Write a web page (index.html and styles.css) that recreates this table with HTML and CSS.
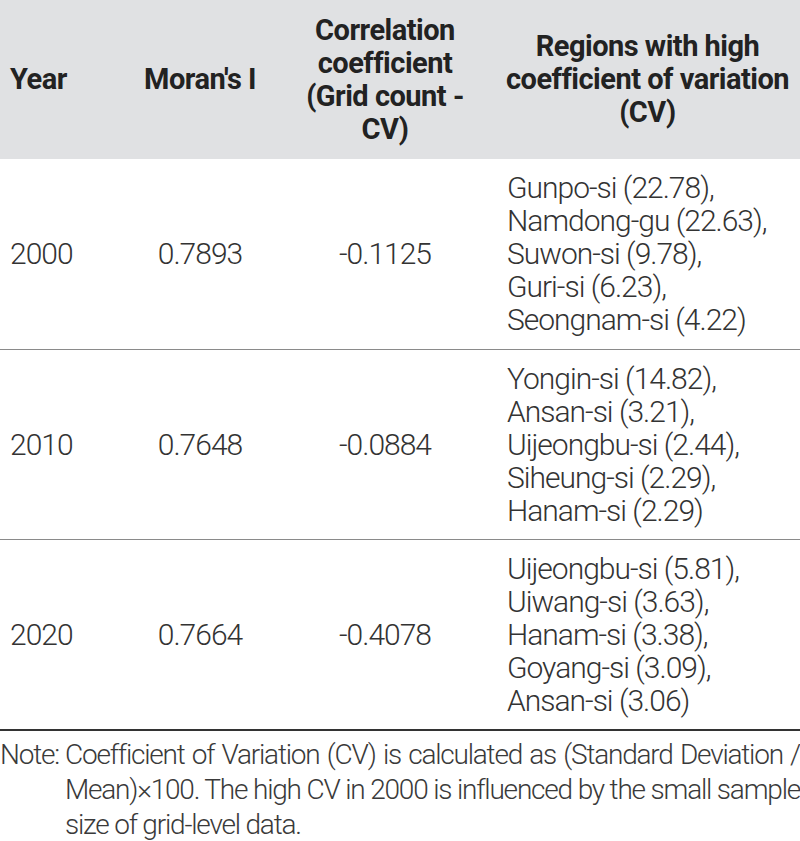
FILE: index.html
```html
<!DOCTYPE html>
<html lang="en">
<head>
<meta charset="utf-8">
<title>Table</title>
<link rel="stylesheet" href="styles.css">
</head>
<body>
<table class="data">
  <colgroup>
    <col class="c-year">
    <col class="c-moran">
    <col class="c-corr">
    <col class="c-reg">
  </colgroup>
  <thead>
    <tr>
      <th class="left">Year</th>
      <th>Moran's I</th>
      <th class="narrow">Correlation coefficient (Grid count - CV)</th>
      <th>Regions with high coefficient of variation (CV)</th>
    </tr>
  </thead>
  <tbody>
    <tr>
      <td class="left">2000</td>
      <td>0.7893</td>
      <td>-0.1125</td>
      <td class="regions">Gunpo-si (22.78),<br>Namdong-gu (22.63),<br>Suwon-si (9.78),<br>Guri-si (6.23),<br>Seongnam-si (4.22)</td>
    </tr>
    <tr>
      <td class="left">2010</td>
      <td>0.7648</td>
      <td>-0.0884</td>
      <td class="regions">Yongin-si (14.82),<br>Ansan-si (3.21),<br>Uijeongbu-si (2.44),<br>Siheung-si (2.29),<br>Hanam-si (2.29)</td>
    </tr>
    <tr>
      <td class="left">2020</td>
      <td>0.7664</td>
      <td>-0.4078</td>
      <td class="regions">Uijeongbu-si (5.81),<br>Uiwang-si (3.63),<br>Hanam-si (3.38),<br>Goyang-si (3.09),<br>Ansan-si (3.06)</td>
    </tr>
  </tbody>
</table>
<div class="note">
  <span class="note-label">Note:</span>
  <p class="note-text">Coefficient of Variation (CV) is calculated as (Standard Deviation / Mean)×100. The high CV in 2000 is influenced by the small sample size of grid-level data.</p>
</div>
</body>
</html>
```

FILE: styles.css
```css
html, body {
  margin: 0;
  padding: 0;
  background: #ffffff;
}

body {
  font-family: Roboto, "Liberation Sans", sans-serif;
  color: #333333;
}

.data {
  width: 800px;
  border-collapse: collapse;
  table-layout: fixed;
}

.c-year { width: 125px; }
.c-moran { width: 150px; }
.c-corr { width: 220px; }
.c-reg { width: 305px; }

.data th {
  background: #e0e1e3;
  color: #222222;
  font-weight: 700;
  font-size: 29px;
  line-height: 33px;
  letter-spacing: -0.5px;
  height: 159px;
  padding: 0 6px;
  box-sizing: border-box;
  text-align: center;
  vertical-align: middle;
}

.data th.narrow {
  padding: 0 26px;
}

.data td {
  font-weight: 300;
  font-size: 30px;
  line-height: 33px;
  letter-spacing: -1px;
  height: 190px;
  padding: 12px 6px;
  box-sizing: border-box;
  text-align: center;
  vertical-align: middle;
  border-bottom: 1px solid #8a8a8a;
  color: #333333;
}

.data tbody tr:last-child td {
  border-bottom: 2px solid #333333;
}

.data .left {
  text-align: left;
  padding-left: 10px;
}

.data td.regions {
  text-align: left;
  padding-left: 12px;
  white-space: nowrap;
}

.note {
  display: flex;
  gap: 6px;
  padding-top: 6px;
  font-weight: 300;
  font-size: 28px;
  line-height: 35px;
  letter-spacing: -1.2px;
  color: #3a3a3a;
}

.note-label {
  flex: none;
}

.note-text {
  margin: 0;
  flex: 1;
  text-align: justify;
}
```
